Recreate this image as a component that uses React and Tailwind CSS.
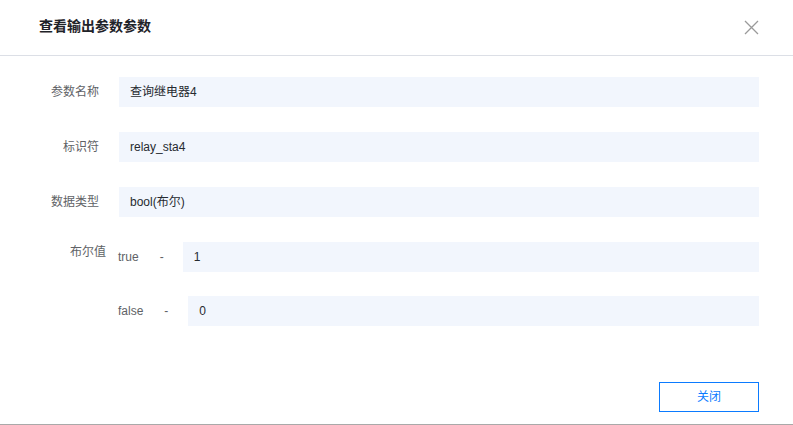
import React from "react";

const font = { fontFamily: '"Liberation Sans", "Noto Sans CJK SC", sans-serif' };

function Field({ label, value }) {
  return (
    <div className="flex items-center">
      <div className="w-[99px] text-right text-[12px] text-[#606266]">{label}</div>
      <div className="ml-[20px] w-[640px] h-[30px] bg-[#f2f6fd] flex items-center pl-[11px] text-[12px] text-[#262a30]">
        {value}
      </div>
    </div>
  );
}

export default function App() {
  return (
    <div style={font} className="w-[793px] h-[425px] bg-white flex flex-col border-b border-[#a9a9a9] overflow-hidden">
      <div className="h-[56px] shrink-0 border-b border-[#dcdfe6] flex items-center justify-between pl-[39px] pr-[34px] pb-[3px]">
        <div className="text-[14px] font-bold text-[#1f2329]">查看输出参数参数</div>
        <svg width="15" height="15" viewBox="0 0 15 15" className="mt-[2px]">
          <path d="M1 1 L14 14 M14 1 L1 14" stroke="#9a9a9a" strokeWidth="1.3" fill="none" />
        </svg>
      </div>
      <div className="flex flex-col gap-[25px] pt-[21px]">
        <Field label="参数名称" value="查询继电器4" />
        <Field label="标识符" value="relay_sta4" />
        <Field label="数据类型" value="bool(布尔)" />
        <div className="flex">
          <div className="w-[106px] text-right text-[12px] text-[#606266] leading-[18px] pt-[1px]">布尔值</div>
          <div className="ml-[12px] flex flex-col gap-[24px]">
            <div className="flex items-center text-[12px] text-[#606266]">
              <span>true</span>
              <span className="ml-[21px] mr-[19px]">-</span>
              <div className="w-[576px] h-[30px] bg-[#f2f6fd] flex items-center pl-[11px] text-[#262a30]">1</div>
            </div>
            <div className="flex items-center text-[12px] text-[#606266]">
              <span>false</span>
              <span className="ml-[21px] mr-[20px]">-</span>
              <div className="w-[571px] h-[30px] bg-[#f2f6fd] flex items-center pl-[11px] text-[#262a30]">0</div>
            </div>
          </div>
        </div>
      </div>
      <div className="flex justify-end pr-[34px] mt-[56px]">
        <button className="w-[100px] h-[30px] border border-[#0b7bff] text-[#0b7bff] text-[12px] bg-white">关闭</button>
      </div>
    </div>
  );
}
